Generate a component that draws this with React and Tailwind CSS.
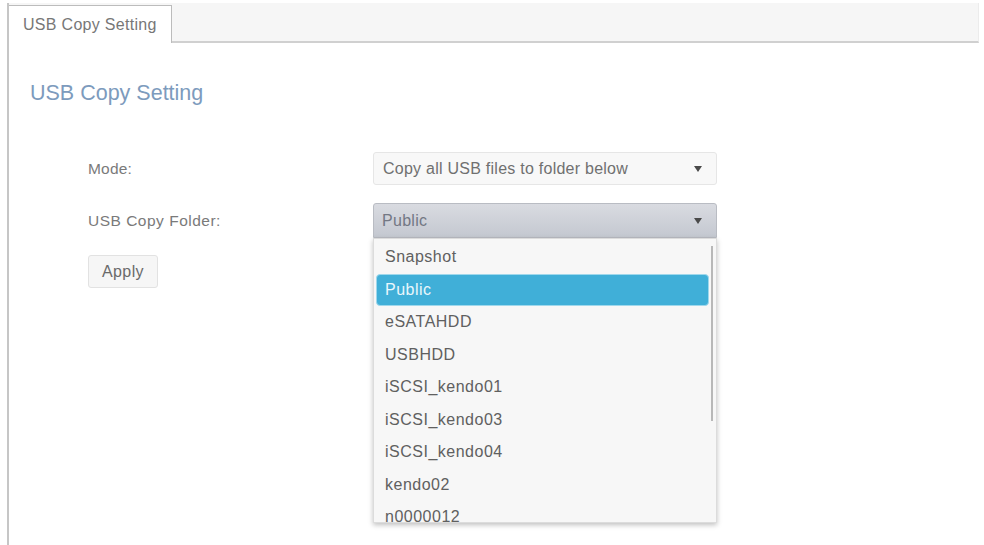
import React from "react";

const Arrow = () => (
  <svg width="8" height="6" viewBox="0 0 8 6" className="shrink-0">
    <path d="M0 0 L8 0 L4 6 Z" fill="#4a4a4a" />
  </svg>
);

const items = [
  "Snapshot",
  "Public",
  "eSATAHDD",
  "USBHDD",
  "iSCSI_kendo01",
  "iSCSI_kendo03",
  "iSCSI_kendo04",
  "kendo02",
  "n0000012",
];

export default function App() {
  return (
    <div className="w-[984px] h-[545px] bg-white overflow-hidden font-['Liberation_Sans',Arial,sans-serif] pl-[7px] pr-[5px] pt-[3px]">
      <div className="h-full border-l-2 border-[#c6c6c6] flex flex-col">
        <div className="h-[40px] shrink-0 bg-[#f6f6f6] border-b-2 border-[#d0d0d0] border-r border-r-[#ececec] flex items-end">
          <div className="h-[38px] w-[163px] -mb-[2px] bg-white border-t border-r border-[#bcbcbc] flex items-center pl-[14px] text-[16px] text-[#777] tracking-[0.3px]">
            USB Copy Setting
          </div>
        </div>
        <div className="flex-1 pl-[21px] pt-[37px]">
          <div className="text-[21.5px] leading-[26px] text-[#7d9bbd]">USB Copy Setting</div>
          <div className="pl-[58px] mt-[46px] flex flex-col">
            <div className="flex items-center h-[33px]">
              <div className="w-[285px] text-[15.5px] text-[#7a7a7a] tracking-[0.2px]">Mode:</div>
              <div className="w-[344px] h-[33px] rounded-[3px] border border-[#e6e6e6] bg-[#f8f8f8] flex items-center justify-between pl-[9px] pr-[14px] text-[16px] text-[#707070] tracking-[0.25px]">
                <span>Copy all USB files to folder below</span>
                <Arrow />
              </div>
            </div>
            <div className="flex items-center h-[35px] mt-[18px]">
              <div className="w-[285px] text-[15.5px] text-[#7a7a7a] tracking-[0.5px]">USB Copy Folder:</div>
              <div className="relative w-[344px] h-[35px]">
                <div className="h-full rounded-t-[3px] border border-[#b9bcc3] bg-gradient-to-b from-[#d9dbe1] to-[#c4c8d0] flex items-center justify-between pl-[8px] pr-[14px] text-[16px] text-[#737884] tracking-[0.3px]">
                  <span>Public</span>
                  <Arrow />
                </div>
                <div className="absolute left-0 top-full w-[344px] h-[285px] bg-[#f7f7f7] border border-[#dcdcdc] shadow-[0_2px_5px_rgba(0,0,0,0.25)] overflow-hidden pt-[2px] pl-[2px] pr-[7px]">
                  {items.map((it) => (
                    <div
                      key={it}
                      className={
                        it === "Public"
                          ? "h-[32.5px] flex items-center pl-[8px] rounded-[4px] bg-[#40afd8] border border-[#9fd8ec] text-[16px] text-[#eaf7fc] tracking-[0.5px]"
                          : "h-[32.5px] flex items-center pl-[9px] text-[16px] text-[#606060] tracking-[0.5px]"
                      }
                    >
                      {it}
                    </div>
                  ))}
                  <div className="absolute right-[3px] top-[7px] w-[2px] h-[175px] bg-[#b8b8b8]" />
                </div>
              </div>
            </div>
            <div className="mt-[17px]">
              <button className="w-[70px] h-[33px] rounded-[3px] border border-[#e2e2e2] bg-[#f6f6f6] text-[16px] text-[#6a6a6a] tracking-[0.4px]">
                Apply
              </button>
            </div>
          </div>
        </div>
      </div>
    </div>
  );
}
